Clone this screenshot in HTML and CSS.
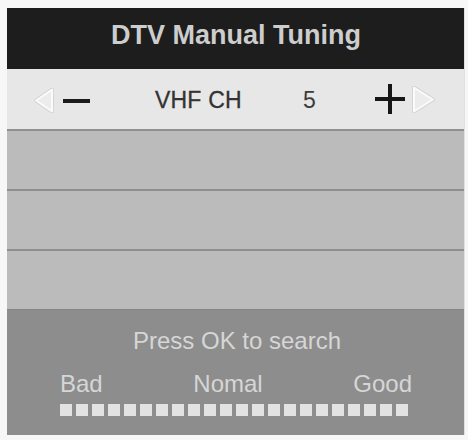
FILE: index.html
```html
<!DOCTYPE html>
<html>
<head>
<meta charset="utf-8">
<link rel="stylesheet" href="styles.css">
</head>
<body>
<div class="panel">
  <div class="header"><span class="title">DTV Manual Tuning</span></div>
  <div class="channel">
    <svg class="tri tri-left" width="20" height="25" viewBox="0 0 20 25">
      <polygon points="18,1.5 18,23.5 2,12.5" fill="#ececec" stroke="#cfcfcf" stroke-width="3.5" stroke-linejoin="round"/>
      <polygon points="18,1.5 18,23.5 2,12.5" fill="#ececec" stroke="#fbfbfb" stroke-width="2" stroke-linejoin="round"/>
    </svg>
    <span class="minus"></span>
    <span class="label">VHF CH</span>
    <span class="value">5</span>
    <svg class="plus" width="30" height="30" viewBox="0 0 30 30">
      <rect x="0" y="13" width="30" height="4" fill="#161616"/>
      <rect x="13" y="0" width="4" height="30" fill="#161616"/>
    </svg>
    <svg class="tri tri-right" width="24" height="27" viewBox="0 0 24 27">
      <polygon points="2,1.5 2,25.5 21,13.5" fill="#ececec" stroke="#cfcfcf" stroke-width="3.5" stroke-linejoin="round"/>
      <polygon points="2,1.5 2,25.5 21,13.5" fill="#ececec" stroke="#fbfbfb" stroke-width="2" stroke-linejoin="round"/>
    </svg>
  </div>
  <div class="row"></div>
  <div class="row"></div>
  <div class="row"></div>
  <div class="footer">
    <div class="prompt">Press OK to search</div>
    <div class="scale">
      <div class="scale-labels"><span>Bad</span><span>Nomal</span><span>Good</span></div>
      <div class="bar">
        <i></i><i></i><i></i><i></i><i></i><i></i><i></i><i></i><i></i><i></i><i></i>
        <i></i><i></i><i></i><i></i><i></i><i></i><i></i><i></i><i></i><i></i><i></i>
      </div>
    </div>
  </div>
</div>
</body>
</html>
```

FILE: styles.css
```css
html, body {
  margin: 0;
  padding: 0;
  background: #f7f7f7;
}
body {
  font-family: "Liberation Sans", Arial, sans-serif;
}
.panel {
  margin: 8px 0 0 7px;
  width: 457px;
  height: 427px;
  display: flex;
  flex-direction: column;
  box-shadow: 1px 0 0 #e0e0e0;
}
.header {
  height: 61px;
  flex: none;
  background: #1d1d1d;
  display: flex;
  align-items: center;
  justify-content: center;
  box-sizing: border-box;
  padding-bottom: 7px;
  padding-left: 1px;
}
.title {
  font-size: 27px;
  line-height: 27px;
  font-weight: bold;
  color: #cdcdcd;
}
.channel {
  height: 60px;
  flex: none;
  box-sizing: border-box;
  background: #e7e7e7;
  display: flex;
  align-items: center;
  padding-left: 27px;
  padding-top: 3px;
}
.tri { display: block; flex: none; }
.minus {
  display: block;
  width: 27px;
  height: 4px;
  background: #1b1b1b;
  margin-left: 9px;
}
.label {
  font-size: 23px;
  line-height: 23px;
  color: #333333;
  margin-left: 65px;
  width: 148px;
  letter-spacing: 0.2px;
  -webkit-text-stroke: 0.3px #333333;
}
.value {
  font-size: 23px;
  line-height: 23px;
  color: #3c3c3c;
  width: 72px;
}
.plus { display: block; flex: none; margin-top: -3px; }
.tri-right { margin-left: 7px; margin-top: -2px; }
.row {
  height: 60px;
  flex: none;
  box-sizing: border-box;
  background: #bbbbbb;
  border-top: 2px solid #8f8f8f;
}
.footer {
  flex: 1;
  background: #8d8d8d;
  border-top: 1px solid #858585;
  box-sizing: border-box;
  display: flex;
  flex-direction: column;
  align-items: center;
  padding-top: 19px;
  color: #d6d6d6;
}
.prompt {
  font-size: 24px;
  line-height: 24px;
  margin-left: 3px;
}
.scale {
  margin-top: 19px;
  width: 352px;
  margin-left: 1px;
}
.scale-labels {
  display: flex;
  justify-content: space-between;
  font-size: 24px;
  line-height: 24px;
}
.bar {
  display: flex;
  gap: 4px;
  margin-top: 8px;
}
.bar i {
  display: block;
  width: 12px;
  height: 12px;
  background: #e2e2e2;
}
```
